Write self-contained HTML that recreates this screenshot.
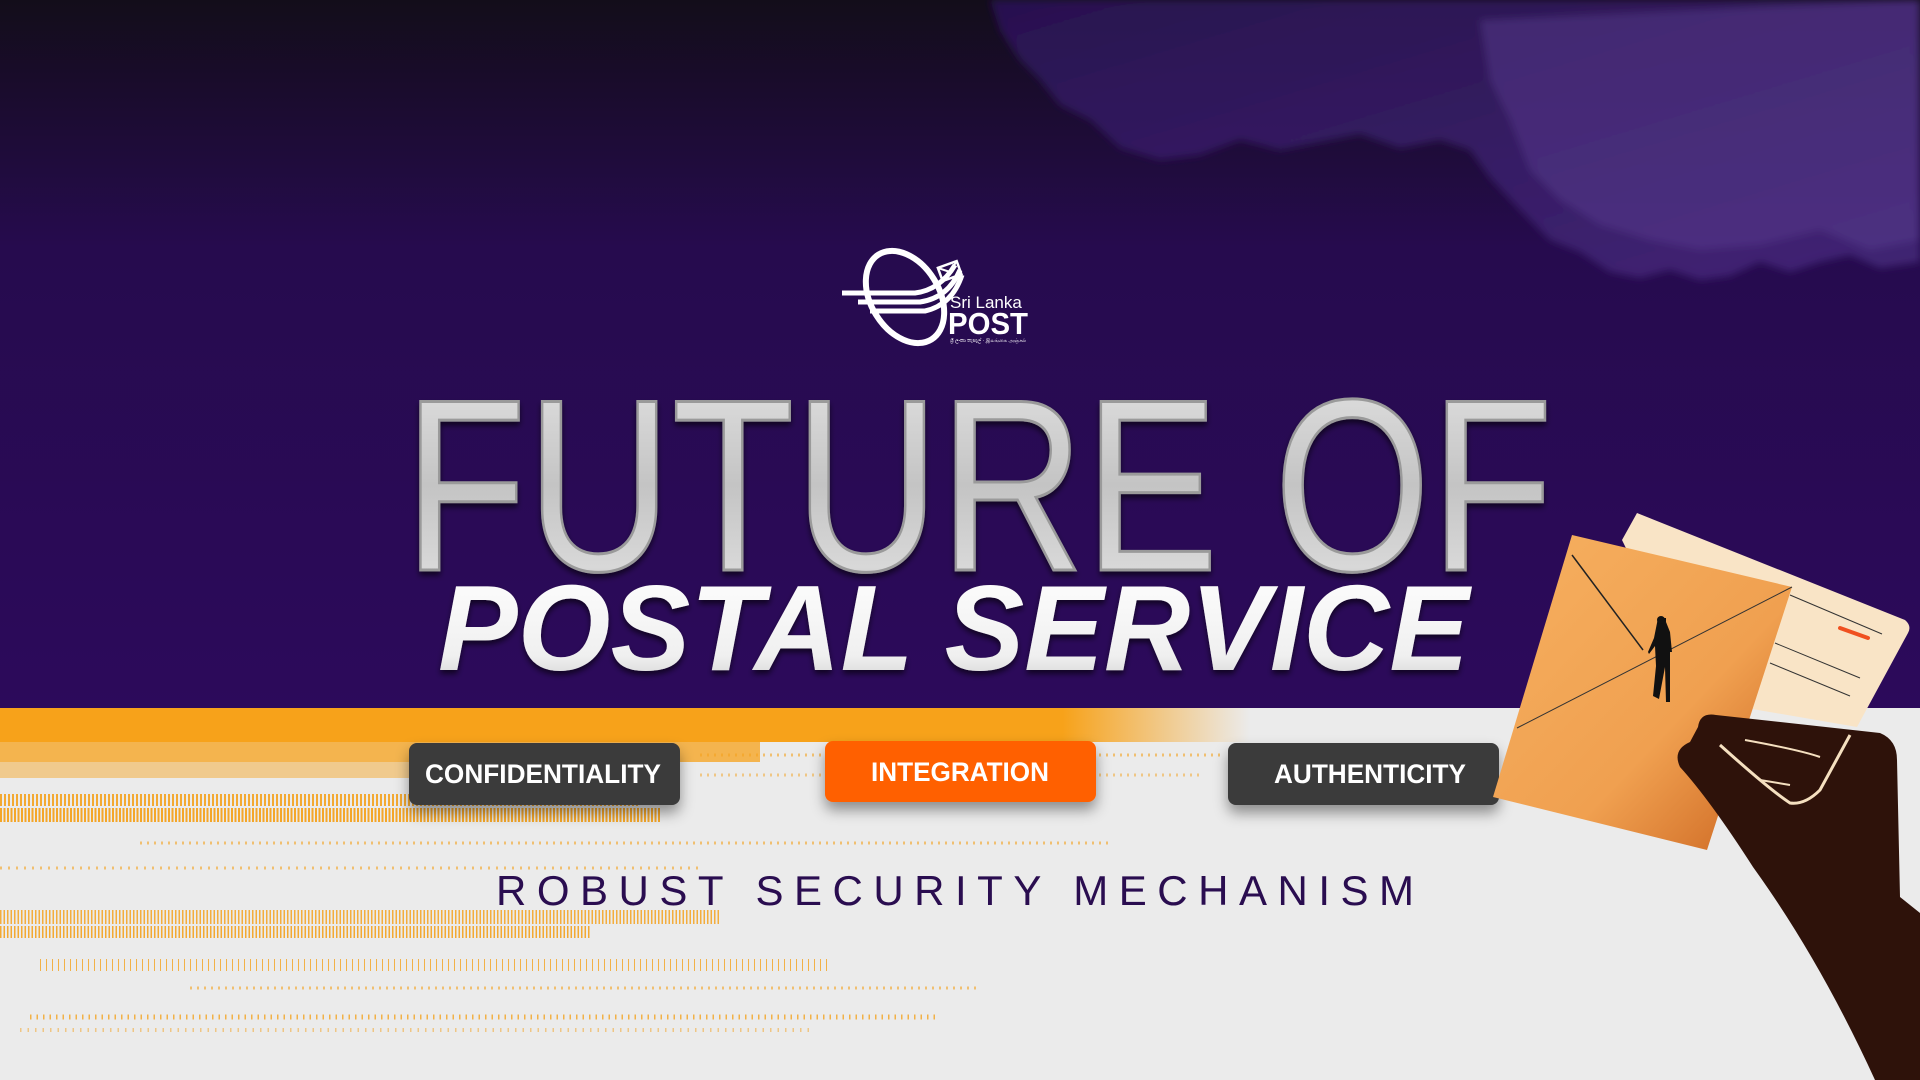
<!DOCTYPE html>
<html><head><meta charset="utf-8"><style>
html,body{margin:0;padding:0;width:1920px;height:1080px;overflow:hidden;background:#ebebeb}
svg{display:block}
</style></head><body>
<svg width="1920" height="1080" viewBox="0 0 1920 1080" xmlns="http://www.w3.org/2000/svg">
<defs>
<linearGradient id="bg" x1="0" y1="0" x2="0" y2="1">
<stop offset="0" stop-color="#130d1a"/><stop offset="0.35" stop-color="#260b4e"/><stop offset="1" stop-color="#2c0a5b"/>
</linearGradient>
<linearGradient id="silver" x1="0" y1="0" x2="0" y2="1">
<stop offset="0" stop-color="#e6e6e6"/><stop offset="0.5" stop-color="#c4c4c4"/><stop offset="0.8" stop-color="#d8d8d8"/><stop offset="1" stop-color="#a8a8a8"/>
</linearGradient>
<linearGradient id="white" x1="0" y1="0" x2="0" y2="1">
<stop offset="0" stop-color="#ffffff"/><stop offset="0.7" stop-color="#f0f0f0"/><stop offset="1" stop-color="#c8c8c8"/>
</linearGradient>
<linearGradient id="env" x1="0" y1="0" x2="1" y2="1">
<stop offset="0" stop-color="#f6b060"/><stop offset="0.6" stop-color="#f0a050"/><stop offset="1" stop-color="#c8601c"/>
</linearGradient>
<linearGradient id="cloud" x1="0" y1="0" x2="1" y2="1">
<stop offset="0" stop-color="#2e1460"/><stop offset="1" stop-color="#4a2c80"/>
</linearGradient>
<linearGradient id="band" x1="0" y1="0" x2="1" y2="0">
<stop offset="0" stop-color="#f7a21a"/><stop offset="0.85" stop-color="#f7a21a"/><stop offset="1" stop-color="#f7a21a" stop-opacity="0"/>
</linearGradient>
<filter id="sh" x="-20%" y="-20%" width="140%" height="160%"><feDropShadow dx="0" dy="8" stdDeviation="7" flood-color="#000" flood-opacity="0.4"/></filter>
<filter id="tsh"><feDropShadow dx="0" dy="4" stdDeviation="3" flood-color="#000" flood-opacity="0.6"/></filter>
<filter id="blur"><feGaussianBlur stdDeviation="4"/></filter>
</defs>
<rect width="1920" height="708" fill="url(#bg)"/>
<!-- clouds -->
<g filter="url(#blur)">
<path d="M990 0 L1920 0 L1920 262 L1880 268 L1850 255 L1820 262 L1790 272 L1760 262 L1730 276 L1700 280 L1670 270 L1640 278 L1610 272 L1580 252 L1550 240 L1520 210 L1490 178 L1470 150 L1440 140 L1400 148 L1360 134 L1320 142 L1280 150 L1240 140 L1200 155 L1160 160 L1120 148 L1090 120 L1060 105 L1040 80 L1020 60 L1000 30 Z" fill="url(#cloud)" opacity="0.75"/>
<path d="M1480 20 L1920 0 L1920 240 L1870 250 L1820 230 L1760 245 L1700 250 L1650 240 L1600 225 L1560 200 L1530 170 L1510 120 L1490 80 Z" fill="#5a3e92" opacity="0.45"/>
</g>
<!-- orange stripes -->
<rect x="0" y="708" width="1250" height="34" fill="url(#band)"/>
<rect x="0" y="742" width="760" height="20" fill="#f7a21a" opacity="0.75"/>
<rect x="0" y="762" width="640" height="16" fill="#f7a21a" opacity="0.45"/>
<g stroke="#f4a21e" fill="none">
<line x1="0" y1="800" x2="640" y2="800" stroke-width="12" stroke-dasharray="2 2" opacity="0.9"/>
<line x1="0" y1="815" x2="660" y2="815" stroke-width="14" stroke-dasharray="2 1.5" opacity="0.95"/>
<line x1="700" y1="755" x2="1220" y2="755" stroke-width="3" stroke-dasharray="2 5" opacity="0.6"/>
<line x1="700" y1="775" x2="1200" y2="775" stroke-width="3" stroke-dasharray="2 5" opacity="0.5"/>
<line x1="140" y1="843" x2="1110" y2="843" stroke-width="3" stroke-dasharray="2 5" opacity="0.6"/>
<line x1="0" y1="868" x2="700" y2="868" stroke-width="3" stroke-dasharray="2 6" opacity="0.6"/>
<line x1="0" y1="917" x2="720" y2="917" stroke-width="14" stroke-dasharray="1.5 2" opacity="0.85"/>
<line x1="0" y1="932" x2="590" y2="932" stroke-width="12" stroke-dasharray="1.5 2" opacity="0.9"/>
<line x1="40" y1="965" x2="830" y2="965" stroke-width="12" stroke-dasharray="1 5" opacity="0.8"/>
<line x1="190" y1="988" x2="980" y2="988" stroke-width="3" stroke-dasharray="2 5" opacity="0.6"/>
<line x1="30" y1="1017" x2="940" y2="1017" stroke-width="5" stroke-dasharray="1.5 5" opacity="0.8"/>
<line x1="20" y1="1030" x2="810" y2="1030" stroke-width="4" stroke-dasharray="1.5 6" opacity="0.5"/>
</g>
<!-- logo -->
<g fill="none" stroke="#fff">
<ellipse cx="905" cy="297" rx="34" ry="50" transform="rotate(-32 905 297)" stroke-width="6"/>
<path d="M842 293 L915 293 Q940 290 955 265" stroke-width="5"/>
<path d="M858 302 L920 302 Q948 298 960 270" stroke-width="5"/>
<path d="M870 311 L925 311 Q952 305 962 275" stroke-width="5"/>
</g>
<g transform="rotate(-20 950 272)"><rect x="940" y="264" width="20" height="14" fill="none" stroke="#fff" stroke-width="2.5"/><path d="M940 264 L950 272 L960 264" fill="none" stroke="#fff" stroke-width="2"/></g>
<text x="950" y="308" font-family="Liberation Sans, sans-serif" font-size="17" fill="#fff">Sri Lanka</text>
<text x="948" y="334" font-family="Liberation Sans, sans-serif" font-size="31" font-weight="bold" fill="#fff" textLength="80" lengthAdjust="spacingAndGlyphs">POST</text>
<text x="950" y="342" font-family="Liberation Sans, sans-serif" font-size="5" fill="#fff">ශ්‍රී ලංකා තැපැල් · இலங்கை அஞ்சல்</text>
<!-- headline -->
<text x="404" y="570" font-family="Liberation Sans, sans-serif" font-size="245" fill="url(#silver)" stroke="#9a9a9a" stroke-width="3" filter="url(#tsh)" textLength="1149" lengthAdjust="spacingAndGlyphs">FUTURE OF</text>
<text x="438" y="670" font-family="Liberation Sans, sans-serif" font-size="122" font-weight="bold" font-style="italic" fill="url(#white)" filter="url(#tsh)" textLength="1031" lengthAdjust="spacingAndGlyphs">POSTAL SERVICE</text>
<!-- buttons -->
<g filter="url(#sh)">
<rect x="409" y="743" width="271" height="62" rx="8" fill="#3a3a3a"/>
<rect x="825" y="741" width="271" height="61" rx="8" fill="#ff6100"/>
<rect x="1228" y="743" width="271" height="62" rx="8" fill="#3a3a3a"/>
</g>
<g font-family="Liberation Sans, sans-serif" font-weight="bold" font-size="27" fill="#fff" text-anchor="middle">
<text x="543" y="783" textLength="236" lengthAdjust="spacingAndGlyphs">CONFIDENTIALITY</text>
<text x="960" y="781" textLength="178" lengthAdjust="spacingAndGlyphs">INTEGRATION</text>
<text x="1370" y="783" textLength="192" lengthAdjust="spacingAndGlyphs">AUTHENTICITY</text>
</g>
<text x="496" y="905" font-family="Liberation Sans, sans-serif" font-size="42" fill="#2a0d50" textLength="918" lengthAdjust="spacing">ROBUST SECURITY MECHANISM</text>
<!-- paper -->
<path d="M1637 513 L1905 620 Q1912 626 1908 633 L1857 727 L1700 700 L1622 540 Z" fill="#f9e4c6"/>
<g stroke="#333" stroke-width="1"><line x1="1790" y1="595" x2="1882" y2="634"/><line x1="1775" y1="643" x2="1860" y2="678"/><line x1="1770" y1="663" x2="1850" y2="696"/></g>
<line x1="1840" y1="628" x2="1868" y2="638" stroke="#f05020" stroke-width="4" stroke-linecap="round"/>
<!-- envelope -->
<path d="M1572 535 L1792 587 L1707 850 L1493 797 Z" fill="url(#env)"/>
<path d="M1572 555 L1643 650" stroke="#222" stroke-width="1.5"/>
<path d="M1517 728 L1792 587" stroke="#333" stroke-width="1"/>
<!-- man -->
<path d="M1658 618 h8 v4 l4 10 l2 20 l-2 0 l0 50 l-4 0 l-1 -35 l-6 32 l-6 -3 l3 -30 l-1 -20 l-6 8 l-1 -2 l6 -14 Z" fill="#111"/>
<circle cx="1661" cy="620" r="4" fill="#111"/>
<!-- hand -->
<path d="M1698 727 Q1700 712 1716 715 L1880 733 Q1897 740 1897 760 L1900 897 L1920 913 L1920 1080 L1875 1080 Q1820 960 1753 867 Q1710 800 1680 767 Q1672 750 1690 742 Z" fill="#2e120a"/>
<path d="M1745 740 Q1800 750 1820 757" stroke="#f5e0c0" stroke-width="2" fill="none"/>
<path d="M1720 745 Q1770 790 1790 803 Q1805 805 1820 790 L1850 735" stroke="#f5e0c0" stroke-width="3" fill="none"/>
<path d="M1760 780 L1790 785" stroke="#f5e0c0" stroke-width="2" fill="none"/>
</svg>
</body></html>
